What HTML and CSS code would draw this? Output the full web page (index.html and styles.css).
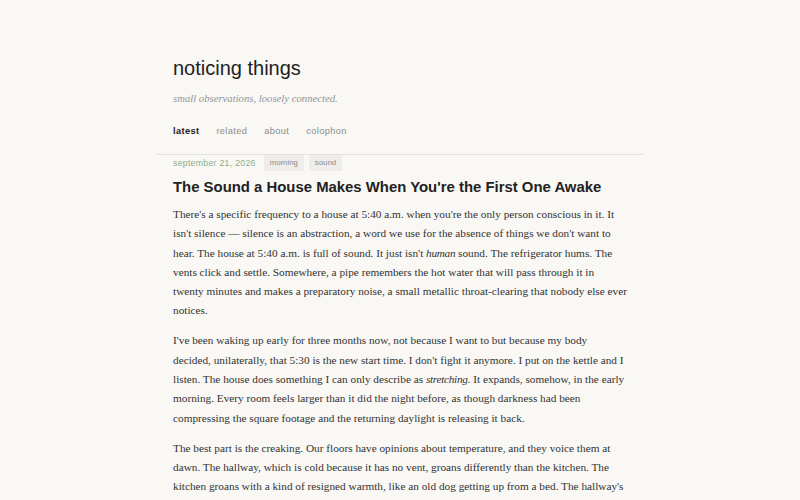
FILE: index.html
```html
<!DOCTYPE html>
<html lang="en">
<head>
<meta charset="utf-8">
<title>noticing things</title>
<link rel="stylesheet" href="styles.css">
</head>
<body>
<div class="page">
  <header class="site-header">
    <h1 class="site-title">noticing things</h1>
    <p class="tagline">small observations, loosely connected.</p>
    <nav class="nav">
      <a class="nav-link active" href="#">latest</a>
      <a class="nav-link" href="#">related</a>
      <a class="nav-link" href="#">about</a>
      <a class="nav-link" href="#">colophon</a>
    </nav>
  </header>
  <article class="post">
    <div class="meta">
      <span class="date">september 21, 2026</span>
      <span class="tags">
        <span class="tag">morning</span>
        <span class="tag">sound</span>
      </span>
    </div>
    <h2 class="post-title">The Sound a House Makes When You're the First One Awake</h2>
    <p>There's a specific frequency to a house at 5:40 a.m. when you're the only person conscious in it. It isn't silence — silence is an abstraction, a word we use for the absence of things we don't want to hear. The house at 5:40 a.m. is full of sound. It just isn't <em>human</em> sound. The refrigerator hums. The vents click and settle. Somewhere, a pipe remembers the hot water that will pass through it in twenty minutes and makes a preparatory noise, a small metallic throat-clearing that nobody else ever notices.</p>
    <p>I've been waking up early for three months now, not because I want to but because my body decided, unilaterally, that 5:30 is the new start time. I don't fight it anymore. I put on the kettle and I listen. The house does something I can only describe as <em>stretching</em>. It expands, somehow, in the early morning. Every room feels larger than it did the night before, as though darkness had been compressing the square footage and the returning daylight is releasing it back.</p>
    <p>The best part is the creaking. Our floors have opinions about temperature, and they voice them at dawn. The hallway, which is cold because it has no vent, groans differently than the kitchen. The kitchen groans with a kind of resigned warmth, like an old dog getting up from a bed. The hallway's groan is sharper, more of a complaint, as if it resents being walked on before the heat comes up.</p>
  </article>
</div>
</body>
</html>
```
FILE: styles.css
```css
html, body {
  margin: 0;
  padding: 0;
  background: #f9f8f5;
}
body {
  color: #2b2b2b;
  font-family: "Liberation Serif", "Times New Roman", serif;
}
.page {
  width: 488px;
  margin: 0 auto;
}
.site-header {
  padding: 55px 17px 16px;
  border-bottom: 1px solid #e4e2de;
}
.site-title {
  margin: 0;
  font-family: "Liberation Sans", Arial, sans-serif;
  font-weight: normal;
  font-size: 20px;
  line-height: 26px;
  color: #222;
}
.tagline {
  margin: 9px 0 0;
  font-style: italic;
  font-size: 10.7px;
  line-height: 16px;
  color: #959595;
}
.nav {
  display: flex;
  gap: 17px;
  margin-top: 18px;
}
.nav-link {
  font-family: "Liberation Sans", Arial, sans-serif;
  font-size: 9.3px;
  letter-spacing: 0.35px;
  line-height: 14px;
  color: #8c8c8c;
  text-decoration: none;
}
.nav-link.active {
  color: #222;
  font-weight: bold;
}
.post {
  padding: 0 17px;
}
.meta {
  display: flex;
  align-items: center;
  gap: 8px;
  height: 16px;
}
.date {
  font-family: "Liberation Sans", Arial, sans-serif;
  font-size: 8.7px;
  letter-spacing: 0.3px;
  color: #8cad8c;
}
.tags {
  display: flex;
  gap: 5px;
}
.tag {
  font-family: "Liberation Sans", Arial, sans-serif;
  font-size: 7.8px;
  color: #8c8c8c;
  background: #efede9;
  padding: 3px 6px;
  line-height: 10px;
}
.post-title {
  margin: 6px 0 8px;
  font-family: "Liberation Sans", Arial, sans-serif;
  font-size: 14.9px;
  line-height: 20px;
  font-weight: bold;
  color: #222;
}
.post p {
  margin: 0 0 10.7px;
  font-size: 11.27px;
  line-height: 19.3px;
  color: #333;
}
.post em {
  letter-spacing: -0.3px;
}
```
